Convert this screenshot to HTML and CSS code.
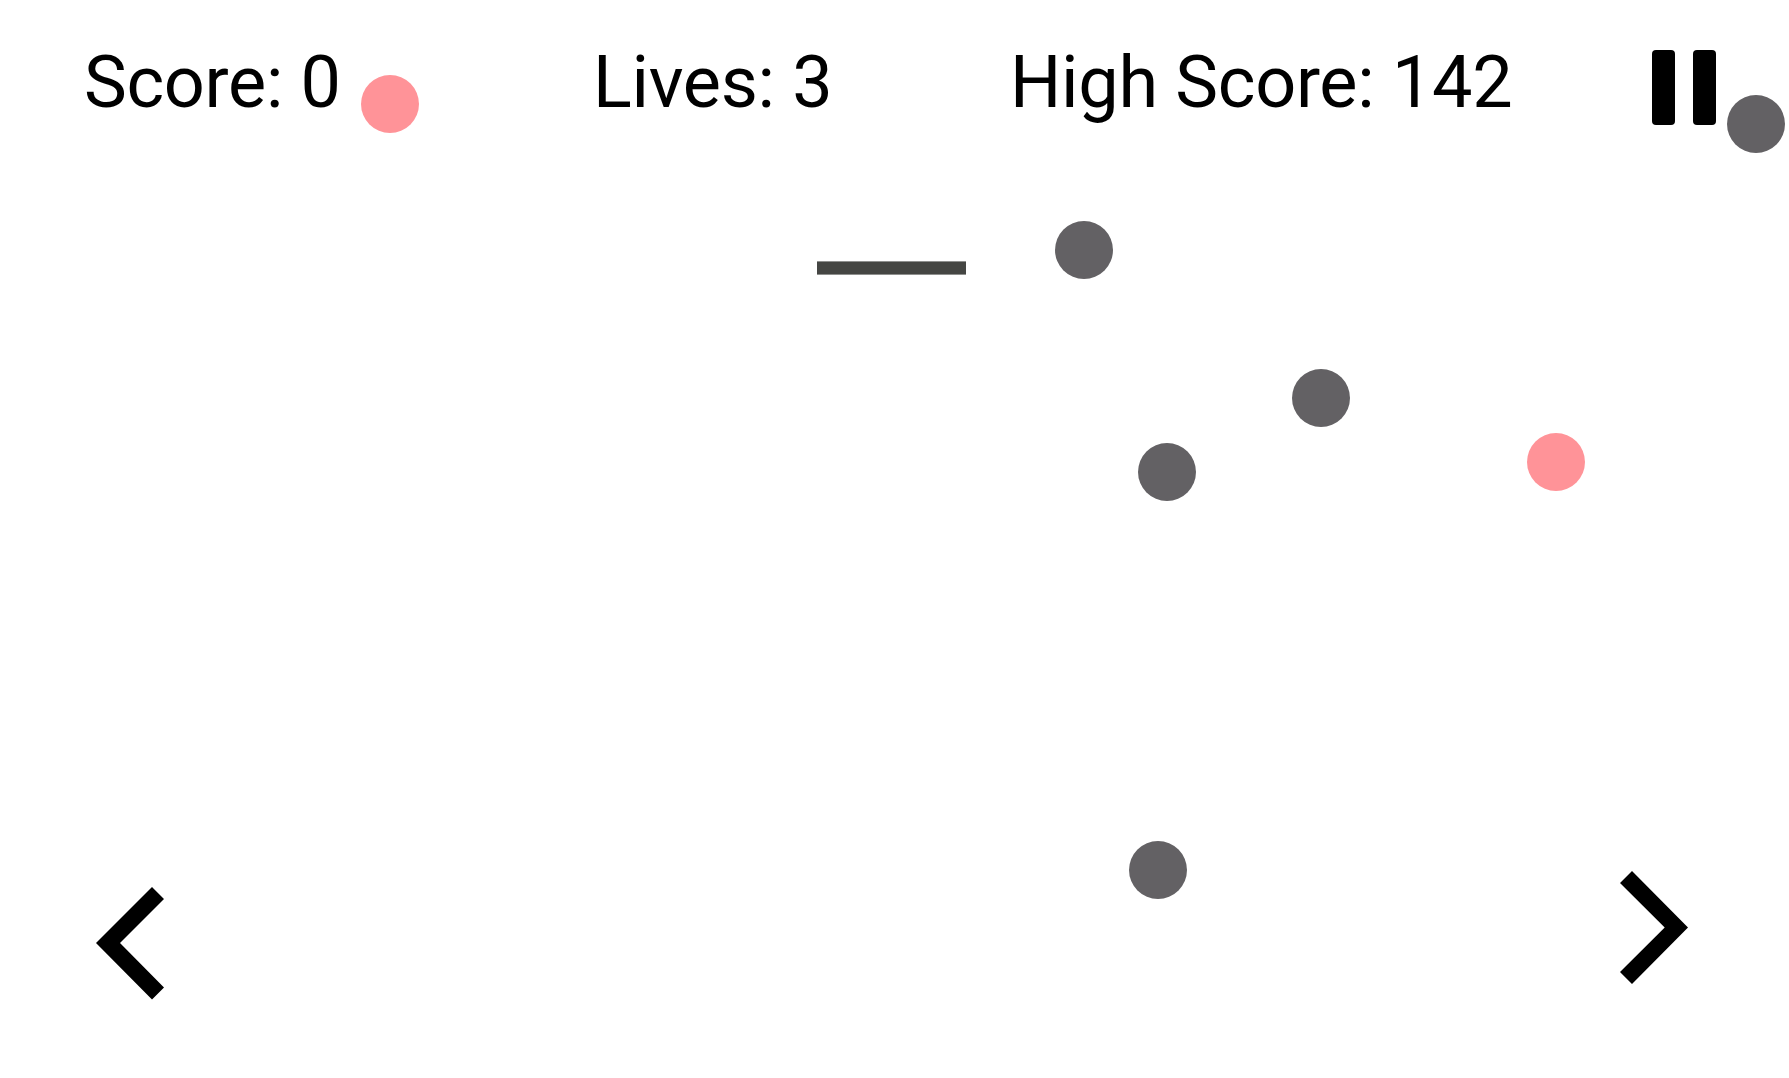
FILE: index.html
```html
<!DOCTYPE html>
<html lang="en">
<head>
<meta charset="utf-8">
<title>Game</title>
<link rel="stylesheet" href="styles.css">
</head>
<body>
<main class="game">
  <header class="hud">
    <span class="stat stat-score">Score: 0</span>
    <span class="stat stat-lives">Lives: 3</span>
    <span class="stat stat-high">High Score: 142</span>
    <button class="pause" aria-label="Pause"><i class="pause-bar"></i><i class="pause-bar"></i></button>
  </header>
  <div class="paddle"></div>
  <div class="ball pink b1"></div>
  <div class="ball gray b2"></div>
  <div class="ball gray b3"></div>
  <div class="ball gray b4"></div>
  <div class="ball gray b5"></div>
  <div class="ball pink b6"></div>
  <div class="ball gray b7"></div>
  <svg class="arrow arrow-left" viewBox="0 0 68 113" aria-label="Left"><path d="M56 0 L68 12 L24 56 L68 100.500 L56 112.500 L0 56 Z"/></svg>
  <svg class="arrow arrow-right" viewBox="0 0 68 113" aria-label="Right"><path d="M12 0 L0 12 L44.700 56.500 L0 101 L12 113 L68 56.500 Z"/></svg>
</main>
</body>
</html>
```
FILE: styles.css
```css
html, body { margin: 0; height: 100%; background: #fff; }
.game { position: relative; width: 1789px; height: 1078px; overflow: hidden; font-family: Roboto, sans-serif; color: #000; }
.hud { display: flex; align-items: flex-start; padding: 41px 0 0 84px; }
.stat { font-size: 72px; letter-spacing: -0.3px; line-height: 84px; white-space: nowrap; }
.stat-score { width: 509px; }
.stat-lives { width: 417px; }
.stat-high { width: 642px; }
.pause { display: flex; gap: 18px; padding: 0; margin: 9px 0 0; border: 0; background: none; }
.pause-bar { display: block; width: 23px; height: 75px; border-radius: 4px; background: #000; }
.paddle { position: absolute; left: 817px; top: 261px; width: 149px; height: 12px; background: #454643; border-top: 1px solid #8f908e; border-bottom: 1px solid #8f908e; }
.ball { position: absolute; width: 58px; height: 58px; border-radius: 50%; }
.pink { background: #ff9398; }
.gray { background: #636164; }
.b1 { left: 361px; top: 75px; }
.b2 { left: 1727px; top: 95px; }
.b3 { left: 1055px; top: 221px; }
.b4 { left: 1292px; top: 369px; }
.b5 { left: 1138px; top: 443px; }
.b6 { left: 1527px; top: 433px; }
.b7 { left: 1129px; top: 841px; }
.arrow { position: absolute; fill: #000; }
.arrow-left { left: 96px; top: 886.500px; width: 68px; height: 113px; }
.arrow-right { left: 1620px; top: 871px; width: 68px; height: 113px; }
```
